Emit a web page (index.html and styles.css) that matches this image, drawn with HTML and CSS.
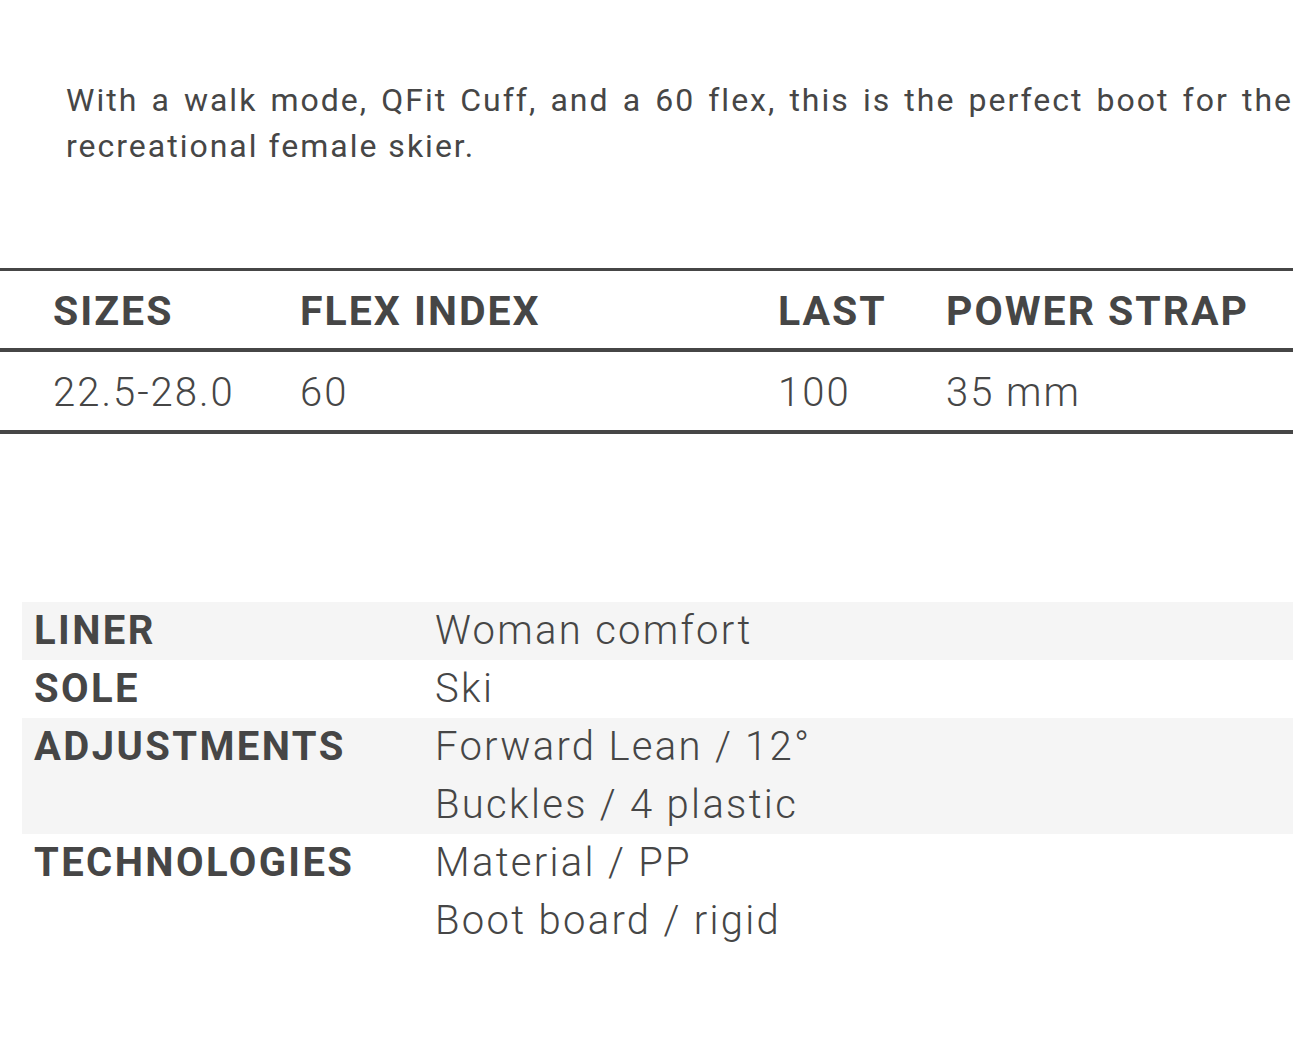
FILE: index.html
```html
<!DOCTYPE html>
<html lang="en">
<head>
<meta charset="utf-8">
<title>Boot specs</title>
<link rel="stylesheet" href="styles.css">
</head>
<body>
<div class="page">
  <p class="intro">With a walk mode, QFit Cuff, and a 60 flex, this is the perfect boot for the recreational female skier.</p>

  <div class="keyspecs">
    <div class="ks-row ks-head">
      <div class="ks-cell">SIZES</div>
      <div class="ks-cell">FLEX INDEX</div>
      <div class="ks-cell">LAST</div>
      <div class="ks-cell">POWER STRAP</div>
    </div>
    <div class="ks-row ks-data">
      <div class="ks-cell">22.5-28.0</div>
      <div class="ks-cell">60</div>
      <div class="ks-cell">100</div>
      <div class="ks-cell">35 mm</div>
    </div>
  </div>

  <div class="details">
    <div class="d-row shaded">
      <div class="d-label">LINER</div>
      <div class="d-values"><div>Woman comfort</div></div>
    </div>
    <div class="d-row">
      <div class="d-label">SOLE</div>
      <div class="d-values"><div>Ski</div></div>
    </div>
    <div class="d-row shaded">
      <div class="d-label">ADJUSTMENTS</div>
      <div class="d-values"><div>Forward Lean / 12°</div><div>Buckles / 4 plastic</div></div>
    </div>
    <div class="d-row">
      <div class="d-label">TECHNOLOGIES</div>
      <div class="d-values"><div>Material / PP</div><div>Boot board / rigid</div></div>
    </div>
  </div>
</div>
</body>
</html>
```

FILE: styles.css
```css
html, body {
  margin: 0;
  padding: 0;
  background: #ffffff;
  overflow: hidden;
}
body {
  font-family: Roboto, "Noto Sans", sans-serif;
  color: #464646;
  width: 1293px;
}
.page {
  display: flex;
  flex-direction: column;
}
.intro {
  margin: 77px 0 0 66px;
  width: 1227px;
  font-size: 32px;
  line-height: 46px;
  letter-spacing: 2px;
  text-align: justify;
}
.keyspecs {
  margin-top: 99px;
  border-top: 3px solid #464646;
  width: 1293px;
}
.ks-row {
  display: grid;
  grid-template-columns: 247px 478px 168px 1fr;
  padding-left: 53px;
  align-items: center;
  border-bottom: 4px solid #464646;
}
.ks-head {
  height: 74px;
  padding-top: 3px;
  font-weight: 700;
  font-size: 41px;
  letter-spacing: 2px;
}
.ks-data {
  height: 76px;
  padding-top: 2px;
  font-weight: 300;
  font-size: 40px;
  letter-spacing: 2px;
}
.details {
  margin-top: 168px;
  margin-left: 22px;
  display: flex;
  flex-direction: column;
}
.d-row {
  display: grid;
  grid-template-columns: 401px 1fr;
  padding-left: 12px;
  line-height: 58px;
  font-size: 40px;
}
.d-row.shaded {
  background: #f5f5f5;
}
.d-label {
  font-weight: 700;
  letter-spacing: 2.4px;
}
.d-values {
  font-weight: 300;
  letter-spacing: 2.3px;
}
```
